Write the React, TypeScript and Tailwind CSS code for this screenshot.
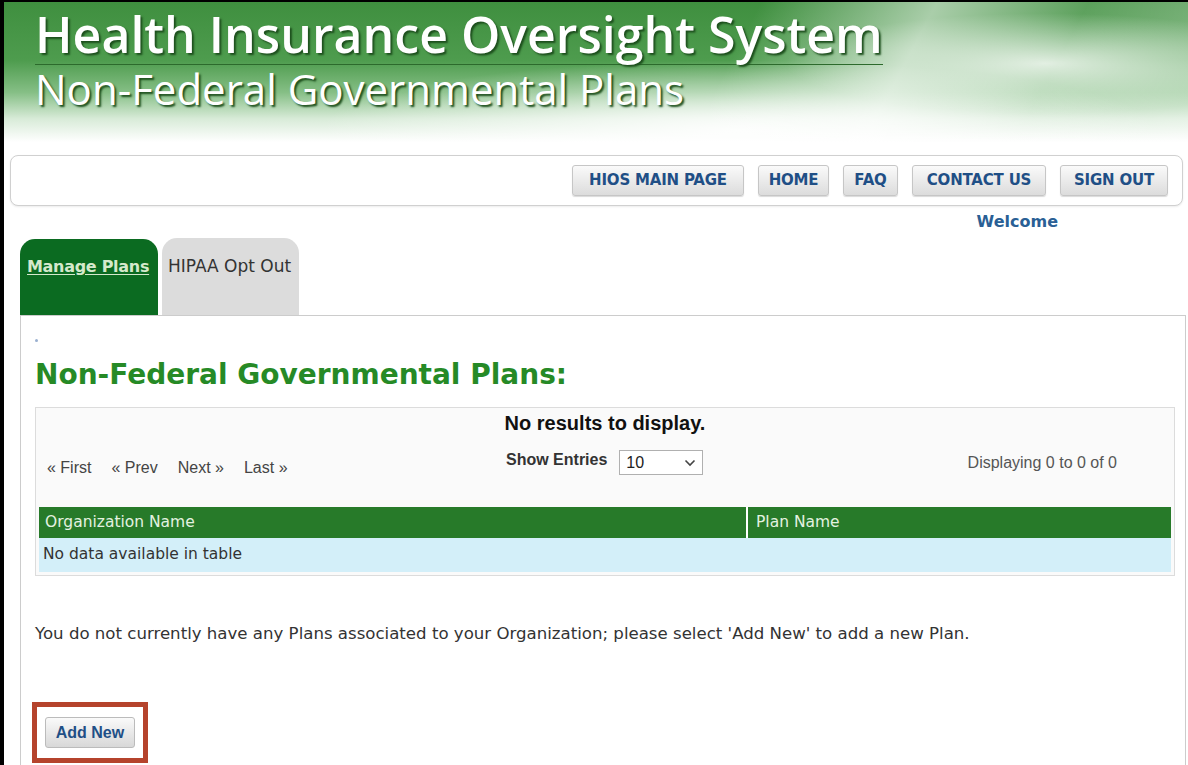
import React from "react";

const navItems: { label: string; w: string }[] = [
  { label: "HIOS MAIN PAGE", w: "w-[172px]" },
  { label: "HOME", w: "w-[71px]" },
  { label: "FAQ", w: "w-[55px]" },
  { label: "CONTACT US", w: "w-[134px]" },
  { label: "SIGN OUT", w: "w-[108px]" },
];

function NavButton({ label, w }: { label: string; w: string }) {
  return (
    <button
      className={`${w} h-[31px] rounded-[3px] border border-[#c6c6c6] bg-gradient-to-b from-[#fafafa] to-[#dcdcdc] text-[#1f4f86] font-bold text-[15px] leading-none tracking-[-0.2px] shadow-[0_1px_1px_rgba(0,0,0,0.15)] [font-family:'DejaVu_Sans',Verdana,sans-serif]`}
    >
      {label}
    </button>
  );
}

export default function App() {
  return (
    <div className="w-[1188px] h-[765px] overflow-hidden bg-white border-t-2 border-l-4 border-black [font-family:'DejaVu_Sans',Verdana,sans-serif]">
      {/* banner */}
      <div className="h-[146px] pl-[31px] pt-[2px] bg-[linear-gradient(118deg,rgba(255,255,255,0)_60%,rgba(255,255,255,0.55)_74%,rgba(255,255,255,0.15)_86%,rgba(255,255,255,0.35)_100%),radial-gradient(ellipse_260px_50px_at_88%_42%,rgba(255,255,255,0.8),rgba(255,255,255,0)),radial-gradient(ellipse_420px_70px_at_62%_88%,rgba(255,255,255,0.9),rgba(255,255,255,0)),linear-gradient(180deg,#3f8f3f_0%,#4e9c4e_40%,#86bf86_62%,#d8ebd8_80%,#ffffff_96%)]">
        <div className="inline-block border-b border-[#2c6a2c] text-white font-semibold text-[50px] leading-[60px] [font-family:'Open_Sans',sans-serif] [text-shadow:2px_2px_2px_#1d4f1d]">
          Health Insurance Oversight System
        </div>
        <div className="mt-[2px] text-white font-medium text-[42px] leading-[44px] [font-family:'Open_Sans',sans-serif] [text-shadow:2px_2px_2px_#1d4f1d]">
          Non-Federal Governmental Plans
        </div>
      </div>

      {/* top navigation */}
      <div className="mt-[7px] ml-[6px] w-[1173px] h-[51px] rounded-[8px] border border-[#d0d0d0] bg-white shadow-[0_1px_2px_rgba(0,0,0,0.08)] flex items-center justify-end pr-[14px] gap-[14px]">
        {navItems.map((n) => (
          <NavButton key={n.label} label={n.label} w={n.w} />
        ))}
      </div>

      <div className="mt-[7px] flex justify-end pr-[130px]">
        <span className="text-[#2a5f95] font-bold text-[16px] leading-[18px]">Welcome</span>
      </div>

      {/* tabs */}
      <div className="mt-[7px] ml-[16px] flex items-end gap-[4px]">
        <div className="w-[138px] h-[76px] rounded-t-[15px] bg-[#0b6b21] pl-[7px] pt-[16px]">
          <span className="text-[#d5e9cc] font-bold text-[16px] tracking-[-0.3px] underline underline-offset-2">Manage Plans</span>
        </div>
        <div className="w-[137px] h-[77px] rounded-t-[15px] bg-[#dcdcdc] pl-[6px] pt-[16px]">
          <span className="text-[#333] text-[17px]">HIPAA Opt Out</span>
        </div>
      </div>

      {/* tab body */}
      <div className="ml-[16px] w-[1166px] h-[460px] border border-[#cccccc] pl-[14px]">
        <div className="mt-[23px] w-[3px] h-[3px] rounded-full bg-[#9ab0d0]" />
        <h1 className="mt-[17px] text-[#268a26] font-bold text-[28px] leading-[32px]">
          Non-Federal Governmental Plans:
        </h1>

        {/* results table */}
        <div className="mt-[16px] w-[1140px] border border-[#dcdcdc] bg-[#fafafa] p-[3px] [font-family:'Liberation_Sans',Arial,sans-serif]">
          <div className="text-center font-bold text-[20px] leading-[22px] text-[#111] pt-[1px]">
            No results to display.
          </div>
          <div className="h-[73px] flex items-start pt-[16px]">
            <div className="w-[467px] pl-[8px] pt-[6px] flex gap-[20px] text-[16px] text-[#444]">
              <span>« First</span>
              <span>« Prev</span>
              <span>Next »</span>
              <span>Last »</span>
            </div>
            <div className="flex items-center gap-[12px]">
              <span className="-mt-[5px] font-bold text-[16px] text-[#333]">Show Entries</span>
              <div className="w-[84px] h-[25px] border border-[#b0b0b0] bg-white flex items-center justify-between px-[6px] text-[16px] text-[#222]">
                <span>10</span>
                <svg width="12" height="8" viewBox="0 0 12 8">
                  <path d="M1.5 1.5 L6 6 L10.5 1.5" fill="none" stroke="#444" strokeWidth="1.6" />
                </svg>
              </div>
            </div>
            <div className="ml-auto pr-[54px] pt-[1px] text-[16px] text-[#555]">Displaying 0 to 0 of 0</div>
          </div>
          <div className="grid grid-cols-[707px_1fr] gap-x-[2px] bg-white [font-family:'DejaVu_Sans',Verdana,sans-serif]">
            <div className="h-[31px] bg-[#277a29] text-[#e4f2e0] text-[15.5px] flex items-center pl-[6px]">Organization Name</div>
            <div className="h-[31px] bg-[#277a29] text-[#e4f2e0] text-[15.5px] flex items-center pl-[8px]">Plan Name</div>
            <div className="col-span-2 h-[34px] bg-[#d3eff9] text-[#333] text-[15.5px] flex items-center pl-[4px]">
              No data available in table
            </div>
          </div>
        </div>

        <p className="mt-[48px] text-[#333] text-[16.6px] leading-[19px]">
          You do not currently have any Plans associated to your Organization; please select 'Add New' to add a new Plan.
        </p>

        <div className="mt-[59px] -ml-[3px] w-[116px] h-[61px] border-[5px] border-[#b5432c] flex items-center justify-center">
          <button className="w-[90px] h-[31px] rounded-[3px] border border-[#bbb] bg-gradient-to-b from-[#fafafa] to-[#d8d8d8] text-[#1f4f86] font-bold text-[16px] [font-family:'Liberation_Sans',Arial,sans-serif]">
            Add New
          </button>
        </div>
      </div>
    </div>
  );
}
